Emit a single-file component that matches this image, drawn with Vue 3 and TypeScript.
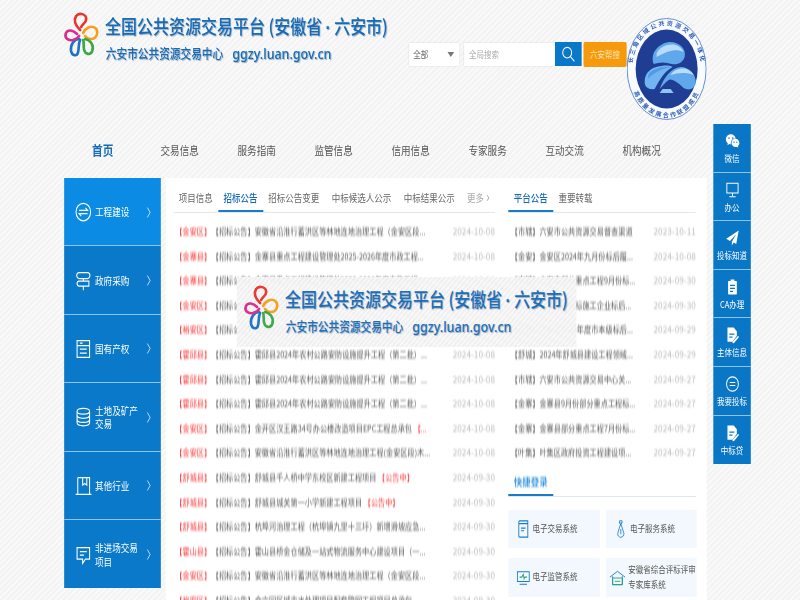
<template>
  <div class="page">
    <!-- 顶部 -->
    <div class="head">
      <div class="brand">
        <svg class="logo" viewBox="0 0 33 43" preserveAspectRatio="none">
          <path v-for="p in petals" :key="p.c" :d="p.d" :stroke="p.c" />
        </svg>
        <div class="brand-text">
          <div class="brand-title">全国公共资源交易平台 (安徽省<span class="dot">·</span>六安市)</div>
          <div class="brand-sub">六安市公共资源交易中心<span class="brand-url">ggzy.luan.gov.cn</span></div>
        </div>
      </div>
      <div class="search">
        <div class="select">全部<i class="caret"></i></div>
        <div class="input">全局搜索</div>
        <div class="search-btn">
          <svg viewBox="0 0 24 24" width="16" height="16"><circle cx="10" cy="10" r="8" /><path d="M15.500 15.500 23 23" /></svg>
        </div>
        <div class="orange">六安帮搜</div>
      </div>
      <svg class="seal" viewBox="627 18 80 102" preserveAspectRatio="none">
        <ellipse cx="667" cy="69" rx="39.500" ry="50.500" fill="#f8fbff" stroke="#3f74c8" stroke-width="0.8" />
        <ellipse cx="667" cy="69" rx="31" ry="39.500" fill="#1f3d92" />
        <path id="sealTop" d="M632.500 69A34.500 43.500 0 0 1 701.500 69" fill="none" />
        <path id="sealBottom" d="M630 70A37 47.500 0 0 0 704 70" fill="none" />
        <text class="seal-text"><textPath href="#sealTop" startOffset="50%" text-anchor="middle">长三角区域公共资源交易一体化</textPath></text>
        <text class="seal-text"><textPath href="#sealBottom" startOffset="50%" text-anchor="middle">高质量发展合作联盟成员</textPath></text>
        <path d="M654 64C650 52 660 43 670 42C680 42 687 49 685 57C683 63 678 65 672 64C666 62 660 62 654 64Z" fill="#5fa8ec" />
        <path d="M657 53C662 44 678 40 684 52C676 48 668 51 657 57Z" fill="#b9dcf8" />
        <path d="M645 82C645 72 652 67 662 66C667 65 672 66 673 67C664 72 660 80 655 89C649 90 645 87 645 82Z" fill="#72b5f2" />
        <path d="M649 74C653 69 662 66 672 67C664 68 656 71 648 79Z" fill="#4f9be8" />
        <path d="M660 89C664 78 671 68 681 67C690 67 697 75 696 83C695 89 689 91 684 88C678 82 672 78 669 80C665 83 663 86 660 89Z" fill="#5fa8ec" />
        <path d="M671 75C675 68 688 65 694 75C686 72 678 73 671 75Z" fill="#b9dcf8" />
        <path d="M660 93L674 93L671 89L663 89Z" fill="#8cc4f4" />
      </svg>
    </div>

    <!-- 导航 -->
    <div class="nav">
      <a v-for="(n, i) in navList" :key="n" :class="{ on: i === 0 }">{{ n }}</a>
    </div>

    <!-- 主体 -->
    <div class="main">
      <div class="sidebar">
        <div v-for="(m, i) in sideMenu" :key="m.label" class="side-item" :class="{ first: i === 0 }">
          <svg class="side-icon" viewBox="0 0 24 24"><path :d="m.d" /></svg>
          <span class="side-label">{{ m.label }}</span>
          <svg class="chevron" viewBox="0 0 8 20"><path d="M1 1l6 9-6 9" /></svg>
        </div>
      </div>

      <div class="panel">
        <div class="col-left">
          <div class="tabs">
            <span v-for="(t, i) in leftTabs" :key="t" class="tab" :class="{ active: i === 1 }">{{ t }}</span>
            <span class="tab more">更多 <i>›</i></span>
          </div>
          <div v-for="(r, i) in leftRows" :key="i" class="row">
            <span class="row-title"><em class="area">【{{ r.area }}】</em>【招标公告】{{ r.title }}<em v-if="r.tail">{{ r.tail }}</em></span>
            <span class="row-date">{{ r.date }}</span>
          </div>
        </div>

        <div class="col-right">
          <div class="tabs">
            <span class="tab active">平台公告</span>
            <span class="tab">重要转载</span>
          </div>
          <div v-for="(r, i) in rightRows" :key="i" class="row right-row">
            <span class="row-title">{{ r.title }}</span>
            <span class="row-date">{{ r.date }}</span>
          </div>
          <div class="tabs quick-head">
            <span class="tab active"><b>快捷登录</b></span>
          </div>
          <div class="quick">
            <div class="quick-card">
              <svg viewBox="0 0 16 20"><path d="M3 1h11v18H3a1 1 0 0 1-1-1V2a1 1 0 0 1 1-1zM2 4h12M5 9h6M5 12h4" /></svg>
              <span>电子交易系统</span>
            </div>
            <div class="quick-card">
              <svg viewBox="0 0 16 24"><path d="M6 1h4v3H6zM6.500 4 8 7l1.500-3M7 7 3 18c0 3 2 5 5 5s5-2 5-5L9 7zM8 12v7" /></svg>
              <span>电子服务系统</span>
            </div>
            <div class="quick-card">
              <svg viewBox="0 0 18 18"><path d="M1 2h16v11H1zM4 16h10" /><path class="green" d="M4 8h3l2-3 1 5 1-2h3" /></svg>
              <span>电子监管系统</span>
            </div>
            <div class="quick-card wide">
              <svg viewBox="0 0 24 20"><path d="M1 9 12 2l11 7M5 8v10h14V8" /><path class="green" d="M5 10h14v8H5zM8 14h8" /></svg>
              <span>安徽省综合评标评审<br />专家库系统</span>
            </div>
          </div>
        </div>
      </div>
    </div>

    <!-- 右侧悬浮 -->
    <div class="float-bar">
      <div v-for="f in floatMenu" :key="f.label" class="float-item">
        <svg viewBox="0 0 24 24" :class="{ solid: f.solid }"><path :d="f.d" /><path v-if="f.pen" class="pen" :d="f.pen" /></svg>
        <span>{{ f.label }}</span>
      </div>
    </div>

    <!-- 浮动窗 -->
    <div class="float-ad">
      <div class="brand">
        <svg class="logo" viewBox="0 0 33 43" preserveAspectRatio="none">
          <path v-for="p in petals" :key="p.c" :d="p.d" :stroke="p.c" />
        </svg>
        <div class="brand-text">
          <div class="brand-title">全国公共资源交易平台 (安徽省<span class="dot">·</span>六安市)</div>
          <div class="brand-sub">六安市公共资源交易中心<span class="brand-url">ggzy.luan.gov.cn</span></div>
        </div>
      </div>
    </div>
  </div>
</template>

<script setup lang="ts">
const petals = [
  { c: '#e8352f', d: 'M15 17C11 13 8 8 11 3C14-1 21 1 21 6C21 10 17 11 16 14' },
  { c: '#f2a01e', d: 'M18 20C20 15 26 12 30 15C34 19 31 26 26 26C23 26 21 25 20 23' },
  { c: '#3aa648', d: 'M20 26C25 27 29 32 27 38C25 43 20 41 19 37C18 33 19 30 18 27' },
  { c: '#1c72c4', d: 'M14 26C9 26 5 32 6 38C7 43 12 44 13 39C14 35 13 31 15 27' },
  { c: '#d92c8c', d: 'M12 21C8 17 3 16 1 20C-1 25 3 28 8 27C11 26 13 25 14 23' }
]

const navList = ['首页', '交易信息', '服务指南', '监管信息', '信用信息', '专家服务', '互动交流', '机构概况']

const sideMenu = [
  { label: '工程建设', d: 'M12 1.500a10.500 10.500 0 1 1 0 21a10.500 10.500 0 0 1 0-21zM6 10h12l-3-3M18 14H6l3 3' },
  { label: '政府采购', d: 'M6 2h12a3.500 3.500 0 0 1 0 7H6a3.500 3.500 0 0 1 0-7zM12 9v3M6 12h14v6H6a3 3 0 0 1 0-6zM12 18v5' },
  { label: '国有产权', d: 'M3 2h18v20H3zM3 8h18M7 5h4M7 12h10M7 17h10' },
  { label: '土地及矿产交易', d: 'M3 5c0-2 4-3.500 9-3.500s9 1.500 9 3.500-4 3.500-9 3.500S3 7 3 5zM3 5v14c0 2 4 3.500 9 3.500s9-1.500 9-3.500V5M3 10c0 2 4 3.500 9 3.500s9-1.500 9-3.500M3 15c0 2 4 3.500 9 3.500s9-1.500 9-3.500' },
  { label: '其他行业', d: 'M4 2h17v20M4 2v20M1 22h23M11 2v9l3-2 3 2V2' },
  { label: '非进场交易项目', d: 'M3 3h18v14h-6l-4 5v-5H3zM7 8h10M7 12h6' }
]

const docPen = 'M4 2h10l5 5v6l-7 8H4zM7 10h8v1.500H7zM7 14h5v1.500H7z'

const floatMenu = [
  { label: '微信', solid: true, d: 'M9.500 3C5 3 1.500 6 1.500 9.700c0 2.200 1.200 4 3 5.200L4 17.500l3-1.500c.9.3 1.700.4 2.600.4-.2-.6-.3-1.200-.3-1.800 0-3.400 3.200-6.100 7.200-6.100h.6C16.400 5.300 13.200 3 9.500 3zM6.500 7a1 1 0 1 0 .01 0zM12.500 7a1 1 0 1 0 .01 0zM23 14.500c0-3-3-5.400-6.300-5.400s-6.300 2.400-6.300 5.400 3 5.400 6.300 5.400c.8 0 1.500-.1 2.200-.3l2.400 1.300-.6-2.100c1.400-1 2.300-2.400 2.300-3.800zM14.500 12.500a.9.900 0 1 0 .01 0zM19 12.500a.9.900 0 1 0 .01 0z' },
  { label: '办公', d: 'M3 3h18v13H3zM12 16v4M7 21h10' },
  { label: '投标知道', solid: true, d: 'M22 2 2 13l6 3 10-9-7 10v5l3-4 4 2z' },
  { label: 'CA办理', solid: true, d: 'M9 2h6v2h3a1 1 0 0 1 1 1v16a1 1 0 0 1-1 1H6a1 1 0 0 1-1-1V5a1 1 0 0 1 1-1h3zM8 9h8v1.500H8zM8 13h8v1.500H8zM8 17h5v1.500H8z' },
  { label: '主体信息', solid: true, d: docPen, pen: 'M21 13l1.500 1.500-8 8-2.500.5.5-2.500z' },
  { label: '我要投标', d: 'M12 2.500a9.500 9.500 0 1 1 0 19a9.500 9.500 0 0 1 0-19zM7.500 10h9M7.500 14h9' },
  { label: '中标贷', solid: true, d: docPen, pen: 'M21 13l1.500 1.500-8 8-2.500.5.5-2.500z' }
]

const leftTabs = ['项目信息', '招标公告', '招标公告变更', '中标候选人公示', '中标结果公示']

const leftRows = [
  { area: '金安区', title: '安徽省沿淮行蓄洪区等林地连地治理工程（金安区段...', date: '2024-10-08' },
  { area: '金寨县', title: '金寨县重点工程建设管理处2025-2026年度市政工程...', date: '2024-10-08' },
  { area: '金寨县', title: '金寨县重点工程建设管理处2025-2026年度市政工程...', date: '2024-10-08' },
  { area: '金安区', title: '安徽省沿淮行蓄洪区等林地连地治理工程（金安区段...', date: '2024-10-08' },
  { area: '裕安区', title: '裕安区城南镇农村公路安防设施提升工程（第二批）...', date: '2024-10-08' },
  { area: '霍邱县', title: '霍邱县2024年农村公路安防设施提升工程（第二批）...', date: '2024-10-08' },
  { area: '霍邱县', title: '霍邱县2024年农村公路安防设施提升工程（第二批）...', date: '2024-10-08' },
  { area: '霍邱县', title: '霍邱县2024年农村公路安防设施提升工程（第二批）...', date: '2024-10-08' },
  { area: '金安区', title: '金开区汉王路34号办公楼改造项目EPC工程总承包 ', tail: '【...', date: '2024-10-08' },
  { area: '金安区', title: '安徽省沿淮行蓄洪区等林地连地治理工程(金安区段)木...', date: '2024-10-08' },
  { area: '舒城县', title: '舒城县千人桥中学东校区新建工程项目 ', tail: '【公告中】', date: '2024-09-30' },
  { area: '舒城县', title: '舒城县城关第一小学新建工程项目 ', tail: '【公告中】', date: '2024-09-30' },
  { area: '舒城县', title: '杭埠河治理工程（杭埠镇九里十三圩）新增滑坡应急...', date: '2024-09-30' },
  { area: '霍山县', title: '霍山县桥金仓储及一站式物流服务中心建设项目（一...', date: '2024-09-30' },
  { area: '金安区', title: '安徽省沿淮行蓄洪区等林地连地治理工程（金安区段...', date: '2024-09-30' },
  { area: '裕安区', title: '合六园区城市水处理项目配套管网工程项目总承包...', date: '2024-09-30' }
]

const rightRows = [
  { title: '【市辖】六安市公共资源交易督查渠道', date: '2023-10-11' },
  { title: '【金安】金安区2024年九月份标后履...', date: '2024-10-08' },
  { title: '【市辖】六安市部分重点工程9月份标...', date: '2024-09-30' },
  { title: '【金安】金安区招投标施工企业标后...', date: '2024-09-30' },
  { title: '【市辖】六安市2024年度市本级标后...', date: '2024-09-29' },
  { title: '【舒城】2024年舒城县建设工程领域...', date: '2024-09-29' },
  { title: '【市辖】六安市公共资源交易中心关...', date: '2024-09-27' },
  { title: '【金寨】金寨县9月份部分重点工程标...', date: '2024-09-27' },
  { title: '【金寨】金寨县部分重点工程7月份标...', date: '2024-09-27' },
  { title: '【叶集】叶集区政府投资工程建设项...', date: '2024-09-27' }
]
</script>

<style>
html,
body {
  overflow: hidden;
  background: repeating-linear-gradient(135deg, #f3f3f3 0 2px, #f9f9f9 2px 4px);
}
</style>

<style scoped>
/* 整页横向压缩 */
.page {
  position: relative;
  width: 960px;
  height: 600px;
  overflow: hidden;
  transform: scaleX(0.8333);
  transform-origin: 0 0;
  font-family: "Noto Sans CJK SC", "Liberation Sans", sans-serif;
  color: #555;
}

/* 顶部 */
.head {
  display: flex;
  height: 130px;
  padding-left: 78px;
}
.head > .brand {
  width: 413px;
  padding-top: 13px;
  box-sizing: border-box;
}
.brand {
  display: flex;
  align-items: flex-start;
}
.logo {
  width: 40px;
  height: 43px;
  flex: none;
  overflow: visible;
}
.logo path {
  fill: none;
  stroke-width: 2.6;
  stroke-linecap: round;
}
.brand-text {
  margin-left: 8px;
  color: #166bb8;
  text-shadow: 1px 1px 1px rgba(40, 80, 120, 0.45);
  white-space: nowrap;
}
.brand-title {
  font-size: 19.200px;
  line-height: 26px;
  font-weight: 500;
}
.dot {
  margin: 0 4px;
  font-family: "Liberation Sans", sans-serif;
  font-weight: 700;
}
.brand-sub {
  margin-left: 1px;
  font-size: 12.800px;
  line-height: 24px;
  font-weight: 500;
  display: flex;
  align-items: center;
}
.brand-url {
  margin-left: 11px;
  font-family: "Noto Sans", sans-serif;
  font-size: 15px;
  font-weight: 500;
}

/* 搜索 */
.search {
  display: flex;
  height: 25px;
  margin-top: 42px;
  font-size: 9px;
  width: 261px;
}
.select {
  position: relative;
  width: 60px;
  height: 23px;
  margin-top: 1px;
  padding-left: 5px;
  box-sizing: border-box;
  line-height: 23px;
  background: #fff;
  color: #666;
  box-shadow: 0 0 2px rgba(0, 0, 0, 0.12);
}
.caret {
  position: absolute;
  right: 6px;
  top: 9px;
  border: 4px solid transparent;
  border-top: 5px solid #777;
  border-bottom: 0;
}
.input {
  width: 110px;
  height: 23px;
  margin: 1px 0 0 6px;
  padding-left: 6px;
  box-sizing: border-box;
  line-height: 23px;
  background: #fff;
  color: #aaa;
  box-shadow: 0 0 2px rgba(0, 0, 0, 0.12);
}
.search-btn {
  width: 32px;
  height: 24px;
  background: #0a78c8;
  display: flex;
  align-items: center;
  justify-content: center;
}
.search-btn svg {
  fill: none;
  stroke: #fff;
  stroke-width: 1.800;
}
.orange {
  width: 52px;
  height: 25px;
  margin-left: 2px;
  background: #f59a0c;
  color: #fde2b4;
  line-height: 25px;
  text-align: center;
  border-radius: 2px;
}
.seal {
  width: 96px;
  height: 102px;
  margin-top: 18px;
  flex: none;
}
.seal-text {
  font-size: 6px;
  font-weight: 700;
  letter-spacing: 2px;
  fill: #2e5cb8;
}

/* 导航 */
.nav {
  display: grid;
  grid-template-columns: repeat(8, 92.400px);
  height: 40px;
  margin-left: 77px;
  font-size: 11.500px;
  line-height: 40px;
  text-align: center;
  color: #555;
}
.nav .on {
  color: #166bb8;
  font-size: 12.800px;
  font-weight: 700;
}

/* 主体 */
.main {
  display: flex;
  gap: 6px;
  margin: 8px 0 0 77px;
}
.sidebar {
  width: 116px;
  flex: none;
  align-self: flex-start;
  color: #fff;
}
.side-item {
  display: flex;
  align-items: center;
  height: 68.400px;
  padding: 1px 11px 0 13px;
  box-sizing: border-box;
  background: #0a79c9;
  border-bottom: 1px solid #8cc4ec;
  font-size: 10.300px;
  line-height: 13.500px;
}
.side-item:last-child {
  border-bottom: 0;
}
.side-item.first {
  background: #0b8be3;
}
.side-icon {
  width: 20px;
  height: 20px;
  flex: none;
  fill: none;
  stroke: #fff;
  stroke-width: 1.500;
}
.side-label {
  width: 54px;
  margin-left: 4px;
}
.chevron {
  width: 7px;
  height: 11px;
  margin-left: auto;
  fill: none;
  stroke: #fff;
  stroke-width: 1.400;
}
.panel {
  display: flex;
  gap: 16px;
  width: 649px;
  height: 422px;
  flex: none;
  padding: 8px 13px 0 9px;
  box-sizing: border-box;
  background: #fff;
  overflow: hidden;
}
.col-left {
  width: 386px;
  flex: none;
}
.col-right {
  width: 225px;
  flex: none;
}
.tabs {
  display: flex;
  height: 26px;
  border-bottom: 1px solid #e3e6ea;
  font-size: 10.200px;
  line-height: 24px;
  color: #666;
  margin-bottom: 6px;
}
.tab {
  height: 26px;
  padding: 0 6.500px;
  box-sizing: border-box;
  white-space: nowrap;
}
.col-left .tab:nth-child(n + 4) {
  margin-left: 2px;
}
.tab.active {
  color: #166bb8;
  font-weight: 500;
  border-bottom: 2px solid #1a7cc8;
}
.col-left .more {
  margin-left: 10px;
  color: #aaa;
}
.more i {
  font-style: normal;
  font-size: 15px;
  line-height: 20px;
}

/* 列表 */
.row {
  display: flex;
  height: 24.600px;
  line-height: 24.600px;
  font-size: 8.600px;
  color: #555;
  filter: blur(0.9px);
  white-space: nowrap;
}
.row em {
  font-style: normal;
  color: #f33;
}
.row em.area {
  margin: 0 5px 0 2.400px;
}
.row-title {
  width: 319px;
  flex: none;
  overflow: hidden;
}
.row-date {
  margin-left: auto;
  font-size: 9.900px;
  color: #bbb;
}
.right-row {
  padding-left: 3px;
}
.right-row .row-title {
  width: 156px;
}
.quick-head {
  margin-top: 5px;
  margin-bottom: 13px;
}
.quick-head b {
  font-weight: 500;
  filter: blur(0.9px);
  display: inline-block;
  color: #1a86dc;
}
.quick {
  display: grid;
  grid-template-columns: 110px 109px;
  grid-auto-rows: 38.500px;
  gap: 10px 7px;
}
.quick-card {
  display: flex;
  align-items: center;
  gap: 3px;
  padding-left: 10px;
  background: #f2f8fd;
  font-size: 9px;
  line-height: 14.500px;
  color: #555;
  white-space: nowrap;
}
.quick-card.wide {
  padding-left: 4px;
}
.quick-card svg {
  width: 16px;
  height: 18px;
  flex: none;
  fill: none;
  stroke: #1a7cc8;
  stroke-width: 1.200;
}
.quick-card.wide svg {
  width: 20px;
}
.quick-card .green {
  stroke: #27a37a;
}

/* 右侧悬浮 */
.float-bar {
  position: absolute;
  left: 856px;
  top: 124px;
  width: 45px;
  color: #fff;
}
.float-item {
  display: flex;
  flex-direction: column;
  align-items: center;
  height: 48.600px;
  padding-top: 8px;
  box-sizing: border-box;
  background: #0a76c6;
  border-bottom: 1px solid #8cc4ec;
  font-size: 9px;
  line-height: 12px;
  white-space: nowrap;
}
.float-item:last-child {
  border-bottom: 0;
}
.float-item svg {
  width: 18px;
  height: 18px;
  margin-bottom: 3px;
  fill: none;
  stroke: #fff;
  stroke-width: 1.500;
}
.float-item svg.solid {
  fill: #fff;
  fill-rule: evenodd;
  stroke: none;
}
.float-item svg.solid .pen {
  fill: #fff;
}

/* 浮动窗 */
.float-ad {
  position: absolute;
  left: 284px;
  top: 277px;
  width: 408px;
  height: 70px;
  padding: 9px 0 0 10px;
  box-sizing: border-box;
  background: repeating-linear-gradient(135deg, #f0f0f0 0 2px, #f8f8f8 2px 4px);
  opacity: 0.97;
}
</style>
